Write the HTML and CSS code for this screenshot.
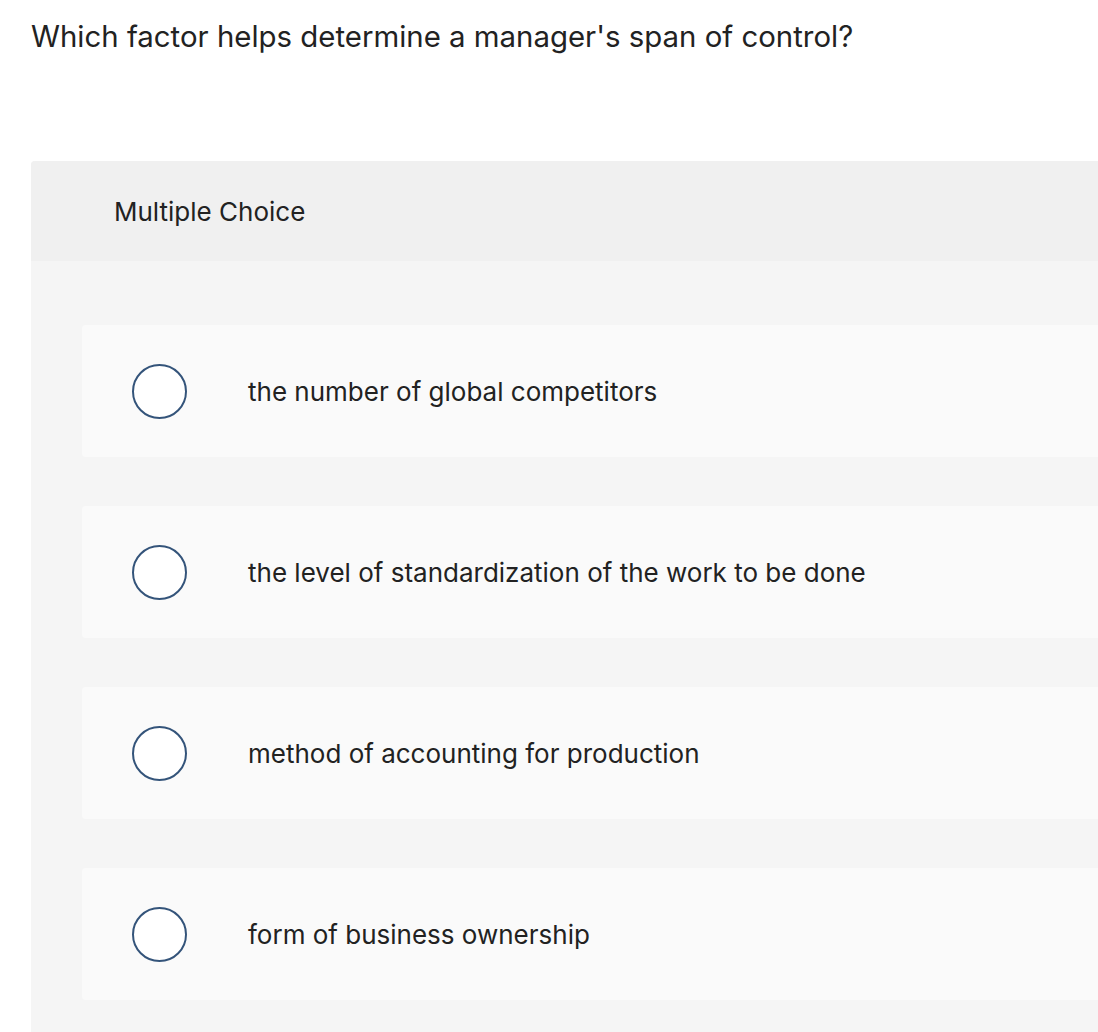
FILE: index.html
```html
<!DOCTYPE html>
<html>
<head>
<meta charset="utf-8">
<link rel="stylesheet" href="styles.css">
</head>
<body>
<div class="question">Which factor helps determine a manager's span of control?</div>
<div class="card">
  <div class="card-header">Multiple Choice</div>
  <div class="options">
    <label class="option"><span class="radio"></span><span class="option-text">the number of global competitors</span></label>
    <label class="option"><span class="radio"></span><span class="option-text">the level of standardization of the work to be done</span></label>
    <label class="option"><span class="radio"></span><span class="option-text">method of accounting for production</span></label>
    <label class="option"><span class="radio"></span><span class="option-text">form of business ownership</span></label>
  </div>
</div>
</body>
</html>
```
FILE: styles.css
```css
html, body {
  margin: 0;
  padding: 0;
  background: #ffffff;
  overflow: hidden;
}
body {
  font-family: "Inter", "Lato", sans-serif;
  color: #222222;
}
.question {
  padding: 19px 0 0 31px;
  font-size: 29.4px;
  line-height: 36px;
}
.card {
  margin: 106px 0 0 31px;
  width: 1100px;
  min-height: 900px;
  background: #f5f5f5;
  border-radius: 4px 0 0 0;
  overflow: hidden;
}
.card-header {
  height: 100px;
  background: #f0f0f0;
  padding-left: 83px;
  display: flex;
  align-items: center;
  font-size: 26px;
}
.options {
  padding: 64px 0 0 51px;
  display: flex;
  flex-direction: column;
  gap: 49px;
}
.option {
  height: 132px;
  background: #fafafa;
  border-radius: 4px 0 0 4px;
  display: flex;
  align-items: center;
  padding-left: 50px;
}
.radio {
  width: 51px;
  height: 51px;
  border: 2px solid #34547a;
  border-radius: 50%;
  background: #ffffff;
  flex: none;
}
.option-text {
  margin-left: 61px;
  font-size: 26px;
  line-height: 30px;
  padding-top: 2px;
}
```
